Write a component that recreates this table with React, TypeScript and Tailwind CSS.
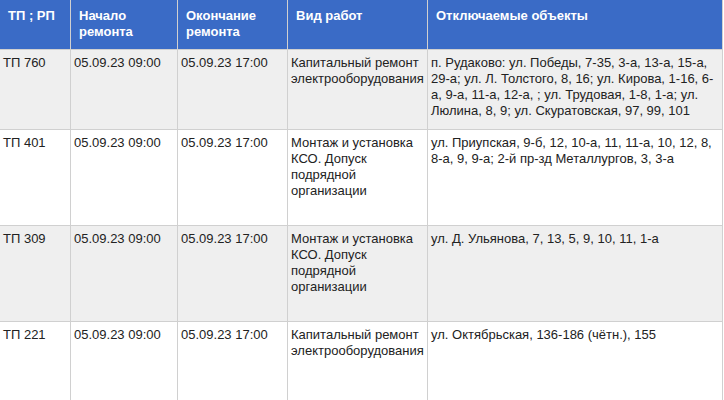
const rows = [
  {
    tp: 'ТП 760',
    start: '05.09.23 09:00',
    end: '05.09.23 17:00',
    work: 'Капитальный ремонт электрооборудования',
    objects:
      'п. Рудаково: ул. Победы, 7-35, 3-а, 13-а, 15-а, 29-а; ул. Л. Толстого, 8, 16; ул. Кирова, 1-16, 6-а, 9-а, 11-а, 12-а, ; ул. Трудовая, 1-8, 1-а; ул. Люлина, 8, 9; ул. Скуратовская, 97, 99, 101',
    h: 'h-[79px]',
  },
  {
    tp: 'ТП 401',
    start: '05.09.23 09:00',
    end: '05.09.23 17:00',
    work: 'Монтаж и установка КСО. Допуск подрядной организации',
    objects: 'ул. Приупская, 9-б, 12, 10-а, 11, 11-а, 10, 12, 8, 8-а, 9, 9-а; 2-й пр-зд Металлургов, 3, 3-а',
    h: 'h-[95px]',
  },
  {
    tp: 'ТП 309',
    start: '05.09.23 09:00',
    end: '05.09.23 17:00',
    work: 'Монтаж и установка КСО. Допуск подрядной организации',
    objects: 'ул. Д. Ульянова, 7, 13, 5, 9, 10, 11, 1-а',
    h: 'h-[95px]',
  },
  {
    tp: 'ТП 221',
    start: '05.09.23 09:00',
    end: '05.09.23 17:00',
    work: 'Капитальный ремонт электрооборудования',
    objects: 'ул. Октябрьская, 136-186 (чётн.), 155',
    h: 'h-[100px]',
  },
]

const headers = ['ТП ; РП', 'Начало ремонта', 'Окончание ремонта', 'Вид работ', 'Отключаемые объекты']

export default function App() {
  return (
    <div className="w-[724px] h-[400px] overflow-hidden bg-white font-['Liberation_Sans',Arial,sans-serif]">
      <div className="w-[723px] grid grid-cols-[70px_106px_109px_139px_294px] gap-px pr-px bg-[#d0d0d0] text-[13px] leading-[16px]">
        {/* Header */}
        {headers.map((h) => (
          <div key={h} className="h-[49px] bg-[#3a6bc6] text-white font-bold pt-[8px] px-2">
            {h === 'Начало ремонта' || h === 'Окончание ремонта' ? (
              <>
                {h.split(' ')[0]}
                <br />
                {h.split(' ')[1]}
              </>
            ) : (
              h
            )}
          </div>
        ))}

        {/* Body */}
        {rows.map((r, i) => {
          const bg = i % 2 === 0 ? 'bg-[#efefef]' : 'bg-white'
          const cell = `${r.h} ${bg} text-[#222] pt-[5px] pl-[3px] pr-[2px]`
          return [
            <div key={`${i}-tp`} className={cell}>{r.tp}</div>,
            <div key={`${i}-s`} className={cell}>{r.start}</div>,
            <div key={`${i}-e`} className={cell}>{r.end}</div>,
            <div key={`${i}-w`} className={cell}>{r.work}</div>,
            <div key={`${i}-o`} className={cell}>{r.objects}</div>,
          ]
        })}
      </div>
    </div>
  )
}
